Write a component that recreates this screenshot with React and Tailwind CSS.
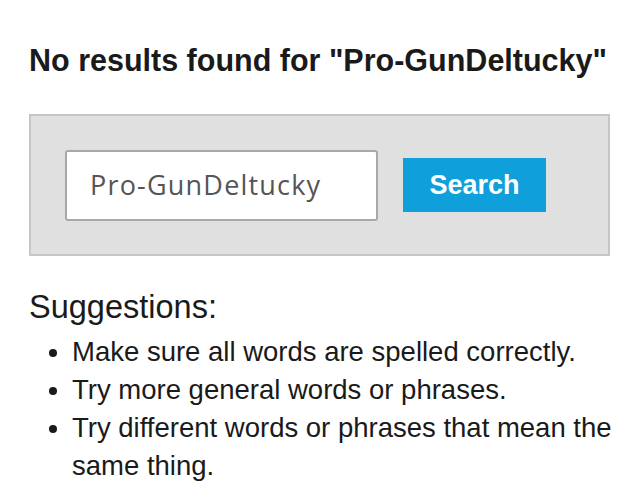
export default function App() {
  return (
    <div className="w-[640px] h-[491px] bg-white overflow-hidden pl-[29px] pr-[26px] pt-[40px]" style={{ fontFamily: '"Liberation Sans", Arial, sans-serif' }}>
      <h1 className="text-[30.5px] leading-[40px] font-bold text-[#1a1a1a] m-0 whitespace-nowrap">No results found for "Pro-GunDeltucky"</h1>
      <div className="mt-[34px] mr-[4px] h-[142px] bg-[#e0e0e0] border-2 border-[#c6c6c6] flex items-center pl-[34px]">
        <div className="w-[313px] h-[71px] bg-white border-2 border-[#a8a8a8] rounded-[3px] flex items-center pl-[23px] text-[27px] tracking-[1.2px] text-[#555]" style={{ fontFamily: '"Open Sans", Lato, sans-serif' }}>
          Pro-GunDeltucky
        </div>
        <div className="ml-[25px] w-[143px] h-[54px] bg-[#0fa0dc] text-white font-bold text-[27px] flex items-center justify-center">
          Search
        </div>
      </div>
      <div className="mt-[33px] text-[32.5px] leading-[36px] text-[#1a1a1a]">Suggestions:</div>
      <ul className="mt-[8px] pl-[43px] list-disc text-[27.5px] leading-[38px] text-[#1a1a1a]">
        <li>Make sure all words are spelled correctly.</li>
        <li>Try more general words or phrases.</li>
        <li>Try different words or phrases that mean the same thing.</li>
      </ul>
    </div>
  );
}
